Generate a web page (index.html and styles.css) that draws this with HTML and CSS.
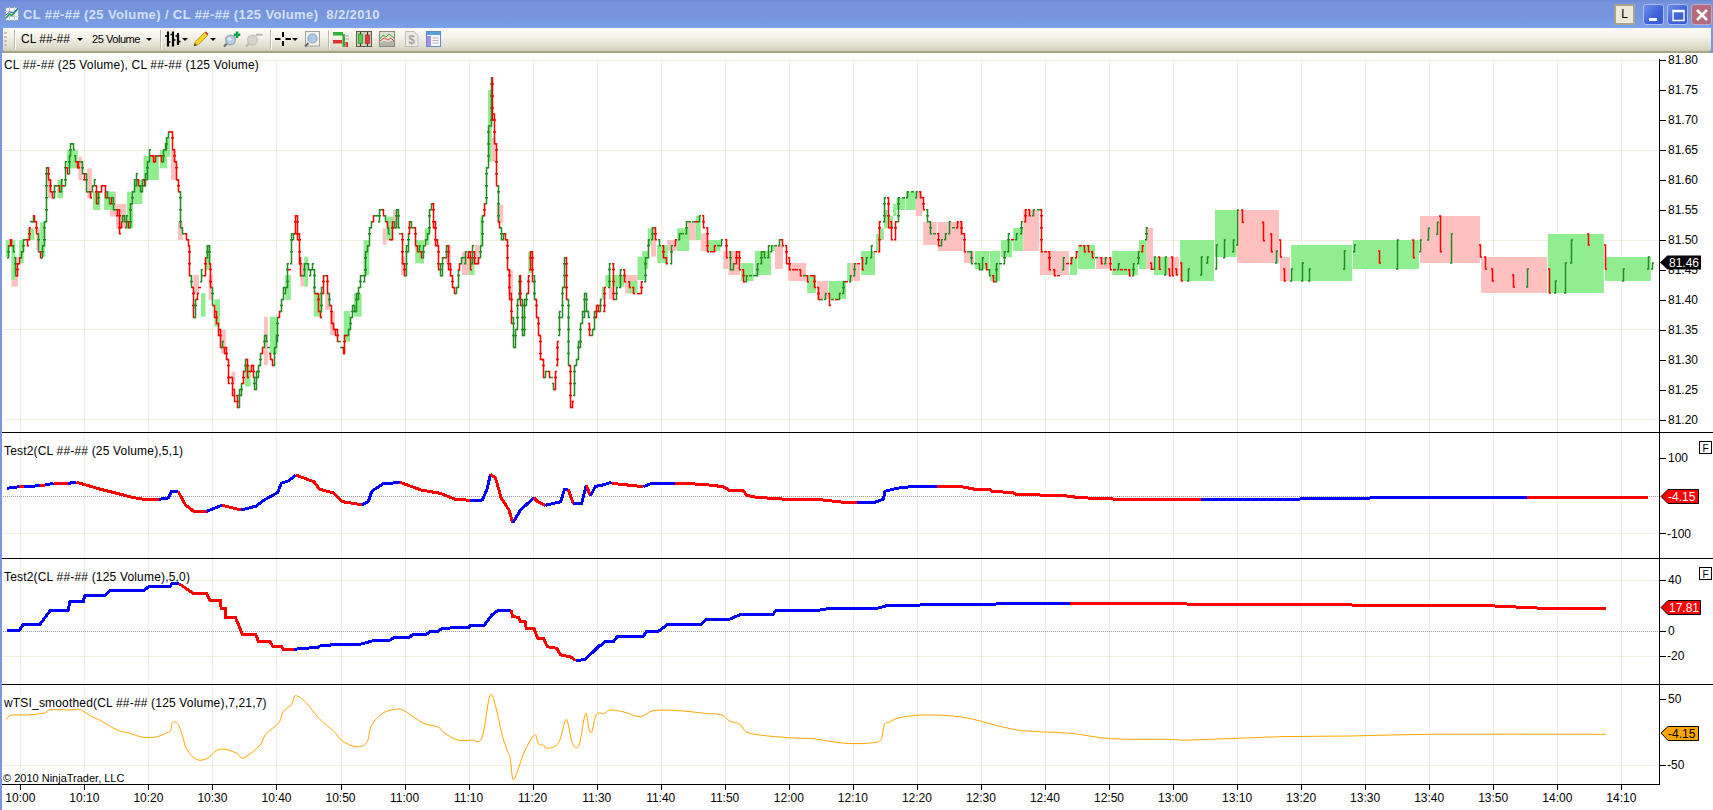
FILE: index.html
```html
<!DOCTYPE html>
<html lang="en">
<head>
<meta charset="utf-8">
<title>CL ##-## (25 Volume) / CL ##-## (125 Volume) 8/2/2010</title>
<link rel="stylesheet" href="styles.css">
</head>
<body>
<div class="window">
  <header class="titlebar">
    <svg class="app-icon" width="14" height="14" viewBox="0 0 14 14">
      <rect x="0.5" y="0.5" width="13" height="13" fill="#eef2f8" stroke="#8f9fb8"/>
      <path d="M0 4.5h14M0 9.5h14M4.5 0v14M9.5 0v14" stroke="#c4cede" stroke-width="1"/>
      <path d="M1 11L4.5 7L7 8.5L12.5 2" fill="none" stroke="#2aa048" stroke-width="1.6"/>
      <path d="M1 8L4.5 5L8 6L13 1" fill="none" stroke="#3468d0" stroke-width="1"/>
    </svg>
    <div class="title-text">CL ##-## (25 Volume) / CL ##-## (125 Volume)  8/2/2010</div>
    <div class="link-btn">L</div>
    <div class="win-btn win-min"><svg width="20" height="20" viewBox="0 0 20 20"><rect x="5" y="13" width="8" height="3" fill="#fff"/></svg></div>
    <div class="win-btn win-max"><svg width="20" height="20" viewBox="0 0 20 20"><path d="M5 5.5h11v10h-11zM5 6.5h11" fill="none" stroke="#fff" stroke-width="1.4"/></svg></div>
    <div class="win-btn win-close"><svg width="20" height="20" viewBox="0 0 20 20"><path d="M5 5L15 15M15 5L5 15" stroke="#fff" stroke-width="2.6"/></svg></div>
  </header>

  <nav class="toolbar">
    <span class="grip ml1"></span>
    <span class="sep ml7"></span>
    <span class="combo combo-inst ml6">CL ##-##</span>
    <span class="caret ml6"></span>
    <span class="combo combo-period ml9">25 Volume</span>
    <span class="caret ml6"></span>
    <span class="sep ml8"></span>

    <svg class="ml4" width="16" height="16" viewBox="0 0 16 16"><path d="M3 0.5v15M8 0.5v15M13 2v12" stroke="#000" stroke-width="2.2" fill="none"/><path d="M0 5h3M3 11h2.5M5.500 3.500h2.500M8 9h2.500M10.500 5h2.500M13 10.500h2.500" stroke="#000" stroke-width="1.4"/></svg>
    <span class="caret ml1"></span>

    <svg class="ml5" width="16" height="16" viewBox="0 0 16 16"><path d="M1 15L2.500 10.500L11.500 1.500L14.500 4.500L5.500 13.500Z" fill="#f7d428" stroke="#a98f1c" stroke-width="0.8"/><path d="M11.500 1.500L13 0.500L15.500 3L14.500 4.500Z" fill="#dd4444"/><path d="M1 15L1.900 12.200L3.800 14.100Z" fill="#333"/></svg>
    <span class="caret ml1"></span>

    <svg class="ml7" width="18" height="16" viewBox="0 0 18 16"><path d="M1 15.500L4.500 12" stroke="#6a6f78" stroke-width="2.200"/><circle cx="7.500" cy="9" r="4.800" fill="#b4cdea" stroke="#a5aab2" stroke-width="1.400"/><circle cx="6.500" cy="8" r="1.800" fill="#e8f1fb"/><path d="M14 0.500v6.500M10.800 3.700h6.500" stroke="#00a84a" stroke-width="2.600"/></svg>
    <svg class="ml4" width="18" height="16" viewBox="0 0 18 16"><path d="M1 15.500L4.500 12" stroke="#b8b8b0" stroke-width="2.200"/><circle cx="7.500" cy="9" r="4.800" fill="#d4d4cc" stroke="#c4c4bc" stroke-width="1.400"/><path d="M11 3.700h6.500" stroke="#b4b4ac" stroke-width="2"/></svg>
    <span class="sep ml7"></span>

    <svg class="ml4" width="16" height="16" viewBox="0 0 16 16"><path d="M0 8h5.500M10.500 8h5.500M8 1v5M8 10v5" stroke="#000" stroke-width="2"/></svg>
    <span class="caret ml1"></span>

    <svg class="ml6" width="16" height="16" viewBox="0 0 16 16"><rect x="1.500" y="0.500" width="14" height="14.500" fill="#f4f2e8" stroke="#a0a0a0"/><path d="M1 15.500L4.500 12" stroke="#666" stroke-width="2"/><circle cx="8.500" cy="7.500" r="4.500" fill="#a9c8ec" stroke="#8ea4bc" stroke-width="1.200"/></svg>
    <span class="sep ml8"></span>

    <svg class="ml4" width="16" height="16" viewBox="0 0 16 16"><rect x="0" y="1" width="10" height="3.500" fill="#34b034"/><rect x="0" y="9" width="9" height="3.500" fill="#e03030"/><rect x="9.500" y="3" width="2.500" height="13" fill="#30a830"/><rect x="12.500" y="11" width="2.500" height="5" fill="#e03030"/><path d="M11 5h5M12 8h4" stroke="#b0b0a8" stroke-width="1"/></svg>
    <svg class="ml7" width="16" height="16" viewBox="0 0 16 16"><rect x="0.500" y="0.500" width="15" height="15" fill="#cfcbb8" stroke="#5a5a50"/><path d="M4.500 1v14M11.500 1v14" stroke="#333" stroke-width="1"/><rect x="2.500" y="3" width="4" height="9.500" fill="#4ad04a" stroke="#1a7a1a" stroke-width="0.600"/><rect x="9.500" y="4" width="4" height="8.500" fill="#e83838" stroke="#8a1a1a" stroke-width="0.600"/></svg>
    <svg class="ml7" width="16" height="16" viewBox="0 0 16 16"><rect x="0.500" y="0.500" width="15" height="15" fill="#e2dfd0" stroke="#8a8a80"/><path d="M1 12L5 10L9 11L15 9V15H1Z" fill="#b4b4a8"/><path d="M1 8L4 4L7 6L10 3L15 7" fill="none" stroke="#38b038" stroke-width="1"/><path d="M1 10L5 7L9 9L12 7L15 10" fill="none" stroke="#e04848" stroke-width="1"/></svg>
    <svg class="ml9" width="15" height="16" viewBox="0 0 15 16"><path d="M1.500 0.500H10L14 4.500V15.500H1.500Z" fill="#ecebe3" stroke="#bdbdb5"/><text class="doc-dollar" x="7.500" y="13">$</text></svg>
    <svg class="ml7" width="15" height="16" viewBox="0 0 15 16"><rect x="0.500" y="0.500" width="14" height="15" fill="#f6f6f4" stroke="#6488c8"/><rect x="1" y="1" width="13" height="3" fill="#58a0e0"/><rect x="1" y="5" width="4" height="10" fill="#a490e4"/><path d="M6.500 7h6M6.500 9.500h6M6.500 12h6" stroke="#b8b8c4" stroke-width="1"/></svg>
  </nav>

  <main class="chart">
    <svg class="pane pane-price" viewBox="2 53 1711 379" width="1711" height="379">
      <g id="marks-price"></g>
      <text class="pane-title" x="4" y="69">CL ##-## (25 Volume), CL ##-## (125 Volume)</text>
      <g class="axis-labels">
        <text x="1668" y="64">81.80</text><text x="1668" y="94">81.75</text><text x="1668" y="124">81.70</text>
        <text x="1668" y="154">81.65</text><text x="1668" y="184">81.60</text><text x="1668" y="214">81.55</text>
        <text x="1668" y="244">81.50</text><text x="1668" y="274">81.45</text><text x="1668" y="304">81.40</text>
        <text x="1668" y="334">81.35</text><text x="1668" y="364">81.30</text><text x="1668" y="394">81.25</text>
        <text x="1668" y="424">81.20</text>
      </g>
      <polygon class="tag-black" points="1660,262.500 1667.500,255.500 1701,255.500 1701,269.500 1667.500,269.500"/>
      <text class="tag-text tag-light" x="1669" y="267">81.46</text>
    </svg>

    <svg class="pane pane-test" viewBox="2 433 1711 125" width="1711" height="125">
      <g id="marks-test-a"></g>
      <text class="pane-title" x="4" y="455">Test2(CL ##-## (25 Volume),5,1)</text>
      <g class="axis-labels">
        <text x="1668" y="462">100</text>
        <text x="1667" y="537.500">-100</text>
      </g>
      <polygon class="tag-red" points="1661,496.500 1668,489.500 1698.500,489.500 1698.500,503.500 1668,503.500"/>
      <text class="tag-text tag-light" x="1668" y="501">-4.15</text>
      <rect class="f-box" x="1699.500" y="441.500" width="12" height="12"/>
      <text class="f-text" x="1705.500" y="452">F</text>
    </svg>

    <svg class="pane pane-test" viewBox="2 559 1711 125" width="1711" height="125">
      <g id="marks-test-b"></g>
      <text class="pane-title" x="4" y="581">Test2(CL ##-## (125 Volume),5,0)</text>
      <g class="axis-labels">
        <text x="1668" y="584">40</text>
        <text x="1668" y="635">0</text>
        <text x="1667" y="660">-20</text>
      </g>
      <polygon class="tag-red" points="1661,607.500 1668,600.500 1700.500,600.500 1700.500,614.500 1668,614.500"/>
      <text class="tag-text tag-light" x="1669" y="612">17.81</text>
      <rect class="f-box" x="1699.500" y="567.500" width="12" height="12"/>
      <text class="f-text" x="1705.500" y="578">F</text>
    </svg>

    <svg class="pane pane-tsi" viewBox="2 685 1711 99" width="1711" height="99">
      <g id="marks-tsi"></g>
      <text class="pane-title" x="4" y="707">wTSI_smoothed(CL ##-## (125 Volume),7,21,7)</text>
      <text class="copyright" x="3" y="782">© 2010 NinjaTrader, LLC</text>
      <g class="axis-labels">
        <text x="1668" y="703">50</text>
        <text x="1667" y="769">-50</text>
      </g>
      <polygon class="tag-orange" points="1661,733 1668,726.500 1698.500,726.500 1698.500,740.500 1668,740.500"/>
      <text class="tag-text" x="1668" y="738">-4.15</text>
    </svg>

    <svg class="time-axis" viewBox="2 784 1711 26" width="1711" height="26">
      <g id="marks-time"></g>
      <g class="time-labels">
        <text x="20.300" y="802">10:00</text><text x="84.300" y="802">10:10</text><text x="148.400" y="802">10:20</text>
        <text x="212.400" y="802">10:30</text><text x="276.500" y="802">10:40</text><text x="340.500" y="802">10:50</text>
        <text x="404.500" y="802">11:00</text><text x="468.600" y="802">11:10</text><text x="532.600" y="802">11:20</text>
        <text x="596.700" y="802">11:30</text><text x="660.700" y="802">11:40</text><text x="724.700" y="802">11:50</text>
        <text x="788.800" y="802">12:00</text><text x="852.800" y="802">12:10</text><text x="916.900" y="802">12:20</text>
        <text x="980.900" y="802">12:30</text><text x="1044.900" y="802">12:40</text><text x="1109" y="802">12:50</text>
        <text x="1173" y="802">13:00</text><text x="1237.100" y="802">13:10</text><text x="1301.100" y="802">13:20</text>
        <text x="1365.100" y="802">13:30</text><text x="1429.200" y="802">13:40</text><text x="1493.200" y="802">13:50</text>
        <text x="1557.300" y="802">14:00</text><text x="1621.300" y="802">14:10</text>
      </g>
    </svg>
  </main>
</div>
<script src="chart.js"></script>
</body>
</html>
```
FILE: styles.css
```css
* { box-sizing: border-box; }
html, body { margin: 0; padding: 0; }
body {
  width: 1713px;
  height: 810px;
  overflow: hidden;
  font-family: "Liberation Sans", Arial, sans-serif;
  font-size: 12px;
  color: #000;
}
.window {
  width: 1713px;
  height: 810px;
  display: flex;
  flex-direction: column;
  background: #7a96df;
  overflow: hidden;
}

/* title bar */
.titlebar {
  flex: none;
  height: 28px;
  display: flex;
  align-items: center;
  padding: 0 1px 0 5px;
  background: linear-gradient(#6c8ad6 0, #7794dc 12%, #7694dc 55%, #7ba2ea 100%);
}
.app-icon { flex: none; }
.title-text {
  flex: 1;
  margin-left: 4px;
  white-space: pre;
  font-size: 13px;
  font-weight: bold;
  letter-spacing: 0.38px;
  color: #d5e1f7;
}
.link-btn {
  width: 21px;
  height: 21px;
  margin-right: 8px;
  display: flex;
  align-items: center;
  justify-content: center;
  border: 2px solid #a8a290;
  background: #ece9d8;
  font-size: 12px;
}
.win-btn {
  width: 21px;
  height: 21px;
  margin-left: 3px;
  border: 1px solid #a9bdf0;
  border-radius: 3px;
  overflow: hidden;
}
.win-btn svg { display: block; }
.link-btn + .win-btn { margin-left: 0; }
.win-min, .win-max { background: linear-gradient(135deg, #6d8fec, #3f60d8 60%, #3a5ad0); }
.win-close { background: #b26a7c; border-color: #c0a8c0; }

/* toolbar */
.toolbar {
  flex: none;
  height: 25px;
  margin: 0 2px 0 3px;
  display: flex;
  align-items: center;
  padding-bottom: 1px;
  background: linear-gradient(#fcfbf6 0, #f3f1e8 40%, #e0decd 80%, #d0cdb8 100%);
  border-bottom: 2px solid #a5a483;
  border-radius: 0 0 4px 3px;
}
.toolbar svg { flex: none; display: block; }
.grip {
  width: 3px;
  height: 15px;
  background: repeating-linear-gradient(#c4c2b0 0, #c4c2b0 2px, transparent 2px, transparent 4px);
}
.sep { width: 1px; height: 19px; background: #bdbba8; box-shadow: 1px 0 0 #fff; flex: none; }
.combo { white-space: nowrap; flex: none; }
.combo-inst { width: 50px; font-size: 12px; }
.combo-period { width: 48px; font-size: 11px; letter-spacing: -0.45px; }
.caret {
  flex: none;
  width: 0;
  height: 0;
  border-left: 3px solid transparent;
  border-right: 3px solid transparent;
  border-top: 3px solid #000;
}
.doc-dollar { font: bold 12px "Liberation Sans", sans-serif; fill: #a8a8a0; text-anchor: middle; }
.ml1 { margin-left: 1px; }
.ml4 { margin-left: 4px; }
.ml5 { margin-left: 5px; }
.ml6 { margin-left: 6px; }
.ml7 { margin-left: 7px; }
.ml8 { margin-left: 8px; }
.ml9 { margin-left: 9px; }

/* chart panes */
.chart {
  flex: 1;
  margin-left: 2px;
  display: flex;
  flex-direction: column;
  background: #000;
}
.pane, .time-axis { display: block; flex: none; background: #fff; }
.pane-price, .pane-test { margin-bottom: 1px; }

.pane-title { font-size: 12px; letter-spacing: 0.18px; fill: #000; }
.copyright { font-size: 11px; fill: #000; }
.axis-labels text { font-size: 12px; fill: #000; }
.time-labels text { font-size: 12px; fill: #000; text-anchor: middle; }

.tag-black { fill: #000; }
.tag-red { fill: #f00; stroke: #000; stroke-width: 1; }
.tag-orange { fill: #ffa500; stroke: #000; stroke-width: 1; }
.tag-text { font-size: 12px; fill: #000; }
.tag-light { fill: #fff; }
.f-box { fill: #fff; stroke: #000; stroke-width: 1; }
.f-text { font-size: 10px; fill: #000; text-anchor: middle; }

.grid-line { stroke: #f0f0e0; stroke-width: 1; shape-rendering: crispEdges; }
.axis-line { stroke: #000; stroke-width: 1; shape-rendering: crispEdges; }
.zero-line { stroke: #9a9a9a; stroke-width: 1; stroke-dasharray: 1 1; shape-rendering: crispEdges; }
.box-up { fill: #90ee90; }
.box-down { fill: #ffc0c0; }
.bar { fill: none; stroke-width: 1.5; }
.bar-up { stroke: #228b22; }
.bar-down { stroke: #f00; }
.study { fill: none; stroke-width: 3; stroke-linejoin: miter; shape-rendering: crispEdges; }
.study-blue { stroke: #00f; }
.study-red { stroke: #f00; }
.study-orange { fill: none; stroke: #ffa500; stroke-width: 1; }
```
FILE: chart.js
```js
(function () {
  var NS = 'http://www.w3.org/2000/svg';
  function add(parent, tag, attrs) {
    var n = document.createElementNS(NS, tag);
    for (var k in attrs) n.setAttribute(k, attrs[k]);
    parent.appendChild(n);
    return n;
  }
  function byId(id) { return document.getElementById(id); }

  /* sampled coordinates, each set in its own frame */
  function frame(ox, oy, sx) {
    return function (p) { return [p[0] / sx + ox, p[1] / 3 + oy]; };
  }
  var fA = frame(0, 60, 2.613);     /* price, up to 11:30 */
  var fB = frame(600, 170, 2.8);    /* price, 11:30 - 13:00 */
  var fC = frame(1150, 190, 2.785); /* price, 13:00 on */
  var fL = frame(0, 430, 2.613);    /* studies left */
  var fM = frame(600, 430, 3);      /* studies middle */
  var fT = frame(0, 680, 1.96);     /* tsi left */
  var fU = frame(800, 680, 1.96);   /* tsi right */

  /* grids */
  var gridX = [];
  for (var i = 0; i < 26; i++) gridX.push(Math.round(20.3 + 64.04 * i) + 0.5);

  function grid(g, top, bottom, rows) {
    gridX.forEach(function (x) { add(g, 'line', { 'class': 'grid-line', x1: x, x2: x, y1: top, y2: bottom }); });
    rows.forEach(function (y) { add(g, 'line', { 'class': 'grid-line', x1: 3, x2: 1659, y1: y + 0.5, y2: y + 0.5 }); });
  }
  function axis(g, top, bottom, ticks) {
    add(g, 'line', { 'class': 'axis-line', x1: 1659.5, x2: 1659.5, y1: top, y2: bottom });
    ticks.forEach(function (y) { add(g, 'line', { 'class': 'axis-line', x1: 1660, x2: 1666, y1: y + 0.5, y2: y + 0.5 }); });
  }
  function zero(g, y) { add(g, 'line', { 'class': 'zero-line', x1: 3, x2: 1661, y1: y + 0.5, y2: y + 0.5 }); }

  var gP = byId('marks-price'), gA = byId('marks-test-a'), gB = byId('marks-test-b'), gC = byId('marks-tsi'), gT = byId('marks-time');

  grid(gP, 60, 432, [60, 150, 240, 329, 419]);
  grid(gA, 433, 558, [533]);
  grid(gB, 559, 684, [580, 656]);
  grid(gC, 685, 784, [765]);

  /* 125-volume boxes: [x0, x1, y0, y1] */
  function boxes(list, f, cls) {
    list.forEach(function (b) {
      var a = f([b[0], b[2]]), c = f([b[1], b[3]]);
      add(gP, 'rect', { 'class': cls, x: a[0], y: a[1], width: c[0] - a[0], height: c[1] - a[1] });
    });
  }
  boxes([[30,47,590,680],[95,105,505,570],[125,135,360,415],[205,215,290,360],[228,240,325,415],[287,303,395,470],[303,330,432,505],[447,460,270,360],[465,478,487,540],[505,520,645,700],[545,557,645,720],[578,590,810,880],[605,615,935,970],[690,700,770,915],[785,795,610,680],[850,862,700,750],[862,875,755,825],[1000,1010,505,555],[1027,1042,450,505],[1048,1060,590,645],[1165,1178,555,610],[1207,1225,575,645],[1240,1252,555,610],[1285,1295,235,305],[1298,1315,435,490],[1328,1340,630,700]], fA, 'box-down');
  boxes([[15,25,540,590],[30,40,540,660],[50,62,540,610],[72,90,505,540],[105,118,487,590],[150,165,360,415],[175,203,270,325],[243,262,395,450],[272,300,395,450],[332,348,395,505],[350,372,360,432],[375,415,288,360],[418,437,270,325],[436,445,235,290],[525,537,700,770],[538,550,555,630],[560,575,718,800],[640,655,915,980],[705,725,770,880],[745,760,645,720],[795,805,590,680],[820,840,700,770],[898,915,753,845],[925,945,700,770],[950,965,540,645],[1010,1027,470,540],[1085,1108,540,610],[1110,1122,505,555],[1225,1240,590,645],[1255,1262,470,555],[1275,1285,90,305],[1380,1390,575,640]], fA, 'box-up');
  boxes([[25,35,350,387],[70,105,315,370],[143,157,175,260],[188,215,210,243],[246,268,156,210],[282,300,190,243],[345,360,243,297],[360,392,243,315],[490,512,225,297],[527,577,279,333],[608,638,333,387],[700,728,279,333],[884,902,66,138],[905,943,156,225],[946,1016,156,243],[1019,1047,243,279],[1185,1229,120,243],[1232,1313,243,315],[1389,1431,261,297],[1530,1548,174,297]], fB, 'box-down');
  boxes([[5,15,350,387],[15,30,315,350],[33,68,315,350],[80,105,333,370],[105,125,260,330],[118,135,243,297],[134,145,175,225],[160,190,225,279],[216,250,175,243],[268,282,138,210],[300,337,210,243],[395,430,279,333],[434,479,243,315],[482,490,225,243],[580,605,315,369],[640,689,333,387],[692,700,279,333],[731,770,243,315],[773,782,192,243],[785,795,175,210],[795,805,120,175],[808,820,138,175],[821,830,102,138],[830,855,84,120],[857,884,66,120],[1050,1090,243,297],[1092,1120,243,333],[1123,1154,210,261],[1157,1184,174,243],[1316,1336,261,315],[1338,1386,225,297],[1434,1506,243,315],[1509,1530,210,297]], fB, 'box-up');
  boxes([[0,8,114,240],[50,81,201,255],[242,359,60,219],[362,390,201,273],[752,919,78,219],[922,1106,201,309]], fC, 'box-down');
  boxes([[11,50,201,255],[84,178,150,273],[181,241,60,201],[393,563,165,273],[565,749,150,237],[1108,1264,132,309],[1267,1395,201,273]], fC, 'box-up');

  /* 25-volume trace */
  var TICK = 5.99;
  var seed = 73;
  function rnd() { seed = (seed * 1664525 + 1013904223) >>> 0; return ((seed >>> 8) % 100000) / 100000; }
  function snap(y) { return 60 + TICK * Math.round((y - 60) / TICK); }
  function bar(x, o, c, up, beads) {
    var d = 'M' + (x - 1.5) + ' ' + o + 'H' + x + 'V' + c + 'H' + (x + 1.5);
    if (beads) {
      /* open/close ticks of the bars stacked along a fast move */
      var lo = Math.min(o, c), hi = Math.max(o, c);
      for (var y = lo + TICK; y < hi - 1; y += TICK * 2) d += 'M' + (x - 1.5) + ' ' + y.toFixed(1) + 'h3';
    }
    add(gP, 'path', { 'class': 'bar ' + (up ? 'bar-up' : 'bar-down'), d: d });
  }
  function trace(points, step, noise, flip, wick) {
    var prev = snap(points[0][1]);
    for (var i = 1; i < points.length; i++) {
      var a = points[i - 1], b = points[i];
      var n = Math.max(1, Math.ceil((b[0] - a[0]) / step));
      for (var k = 1; k <= n; k++) {
        var x = a[0] + (b[0] - a[0]) * k / n;
        var y = a[1] + (b[1] - a[1]) * k / n;
        var inner = k < n;
        if (inner) y += (rnd() - 0.5) * noise;
        var c = snap(y);
        var up = c < prev || (c === prev && rnd() < 0.5);
        if (rnd() < flip) up = !up;
        var px = Math.round(x) + 0.5;
        var beads = Math.abs(c - prev) > TICK * 1.5;
        if (inner && rnd() < wick) {
          /* wick past the close; sampled turning points stay exact */
          bar(px, prev, up ? c - TICK : c + TICK, up, beads);
        } else {
          bar(px, prev, c, up, beads);
        }
        prev = c;
      }
    }
  }
  trace([[15,590],[25,545],[40,640],[50,600],[60,545],[80,480],[90,490],[105,590],[115,490],[120,330],[130,400],[150,380],[175,340],[183,255],[195,300],[210,310],[225,390],[240,370],[250,430],[265,370],[285,430],[315,490],[335,500],[345,400],[375,370],[385,310],[420,300],[445,220],[455,300],[465,390],[470,510],[490,560],[500,680],[505,770],[540,560],[550,680],[565,790],[590,900],[618,1040],[640,900],[665,980],[690,830],[710,910],[730,750],[745,680],[770,470],[785,640],[810,620],[830,760],[850,650],[870,800],[890,870],[915,770],[950,640],[965,510],[995,455],[1020,540],[1035,450],[1055,640],[1070,490],[1100,600],[1127,435],[1150,640],[1165,560],[1187,700],[1205,600],[1250,600],[1265,440],[1282,55],[1290,260],[1300,490],[1320,540],[1340,860],[1355,650],[1365,820],[1385,575],[1410,900],[1445,980],[1473,595],[1490,1040],[1527,700],[1540,830],[1568,720]].map(fA), 2.2, 17, 0.3, 0.3);
  trace([[0,420],[25,280],[35,385],[55,300],[105,370],[125,260],[145,175],[185,280],[210,210],[250,160],[278,140],[300,240],[340,210],[365,300],[380,245],[400,335],[440,280],[480,230],[510,225],[530,300],[570,315],[590,315],[610,385],[650,385],[690,340],[710,280],[770,240],[795,85],[815,210],[835,85],[885,70],[905,120],[925,190],[945,225],[1000,160],[1020,240],[1060,290],[1100,330],[1130,245],[1165,195],[1190,120],[1225,120],[1235,240],[1270,315],[1345,225],[1390,265],[1440,300],[1480,310],[1530,175]].map(fB), 4.5, 11, 0.22, 0.2);

  /* sparse bars at the right: [x, y0, y1, up] */
  [[3,220,238,0],[12,201,238,1],[25,201,238,0],[42,201,255,1],[52,237,257,0],[62,201,257,0],[73,237,255,0],[85,219,273,0],[105,237,273,1],[142,201,255,1],[160,201,219,1],[183,165,237,1],[205,150,203,1],[232,150,185,1],[243,60,165,1],[257,60,97,0],[315,97,152,0],[338,132,185,0],[352,183,219,1],[363,150,201,0],[372,237,273,0],[392,237,273,1],[424,219,273,1],[443,237,273,1],[541,183,237,1],[567,165,185,1],[639,183,219,0],[689,150,237,1],[733,150,203,0],[753,150,185,1],[775,115,150,1],[798,97,133,1],[808,78,185,0],[837,132,219,1],[920,165,201,0],[932,201,237,0],[953,237,273,0],[1010,255,291,0],[1051,237,291,1],[1110,237,309,0],[1127,273,309,1],[1155,219,309,1],[1173,150,219,1],[1220,132,165,0],[1268,165,237,0],[1316,237,273,1],[1388,201,237,1],[1399,219,237,1]].forEach(function (b) {
    var p = fC([b[0], b[1]]), q = fC([b[0], b[2]]);
    var x = Math.round(p[0]) + 0.5;
    if (b[3]) bar(x, q[1], p[1], true, false); else bar(x, p[1], q[1], false, false);
  });

  /* studies */
  function study(g, cls, pts) {
    add(g, 'polyline', { 'class': cls, points: pts.map(function (p) { return p[0].toFixed(1) + ',' + p[1].toFixed(1); }).join(' ') });
  }
  var B = 'study study-blue', R = 'study study-red';

  zero(gA, 496);
  [
    [B, fL, [[18,175],[50,170]]], [R, fL, [[50,170],[62,170]]], [B, fL, [[62,170],[105,167]]], [R, fL, [[105,167],[118,165]]],
    [B, fL, [[118,165],[140,160]]], [R, fL, [[140,160],[178,160]]], [B, fL, [[178,160],[200,157]]],
    [R, fL, [[200,157],[225,165],[260,177],[305,190],[350,203],[375,208],[415,208]]],
    [B, fL, [[415,208],[440,204],[447,185],[465,184]]],
    [R, fL, [[465,184],[485,225],[505,243],[540,244]]],
    [B, fL, [[540,244],[580,226]]], [R, fL, [[580,226],[630,240]]],
    [B, fL, [[630,240],[670,228],[690,210],[725,188],[735,160],[755,152],[773,135]]],
    [R, fL, [[773,135],[820,155],[835,178],[870,188],[895,215],[945,224]]],
    [B, fL, [[945,224],[962,215],[972,183],[1000,162],[1045,157]]],
    [R, fL, [[1045,157],[1100,180],[1150,190],[1190,208],[1228,211]]],
    [B, fL, [[1228,211],[1260,210],[1272,180],[1282,132]]],
    [R, fL, [[1282,132],[1295,145],[1310,205],[1330,240],[1340,279]]],
    [B, fL, [[1340,279],[1360,240],[1395,203]]], [R, fL, [[1395,203],[1405,215],[1425,226]]],
    [B, fL, [[1425,226],[1465,215],[1475,178],[1485,178]]], [R, fL, [[1485,178],[1498,222]]],
    [B, fL, [[1498,222],[1520,220],[1532,166]]], [R, fL, [[1532,166],[1543,198]]],
    [B, fL, [[1543,198],[1555,170],[1568,166]]],
    [B, fM, [[0,167],[35,157]]],
    [R, fM, [[35,160],[130,170]]],
    [B, fM, [[130,170],[155,160],[225,160]]],
    [R, fM, [[225,160],[310,163],[370,170],[390,182],[430,182],[440,196],[470,202],[560,208],[650,208],[740,218],[770,218]]],
    [B, fM, [[770,218],[820,218],[850,208],[855,184],[890,175],[950,168],[1010,168]]],
    [R, fM, [[1010,168],[1085,170],[1125,178],[1170,178],[1175,184],[1240,188],[1245,192],[1320,195],[1400,198],[1440,203],[1560,208],[1803,208]]],
    [B, fM, [[1803,208],[2100,207],[2460,202],[2781,202]]],
    [R, fM, [[2781,202],[3144,202]]]
  ].forEach(function (s) { study(gA, s[0], s[2].map(s[1])); });

  zero(gB, 631);
  [
    [B, fL, [[18,601],[50,601],[62,582],[105,582],[118,562],[132,541],[178,541],[183,513],[218,513],[222,495],[275,495],[288,480],[378,480],[390,468],[445,468],[450,460],[468,461]]],
    [R, fL, [[468,461],[505,490],[540,490],[548,510],[575,510],[578,535],[590,535],[590,562],[615,562],[633,612],[668,612],[675,633],[705,633],[712,648],[735,648],[740,658],[768,658]]],
    [B, fL, [[768,658],[830,652],[840,646],[945,642],[975,632],[1020,630],[1030,622],[1070,622],[1080,612],[1115,612],[1125,604],[1145,604],[1155,595],[1225,592],[1230,586],[1265,586],[1285,555],[1300,542],[1335,541]]],
    [R, fL, [[1335,541],[1340,560],[1355,562],[1360,575],[1372,575],[1375,595],[1395,595],[1405,625],[1420,625],[1430,650],[1455,655],[1465,675],[1490,680],[1505,692]]],
    [B, fL, [[1505,692],[1530,688],[1550,665],[1568,645]]],
    [B, fM, [[0,648],[15,635],[40,635],[52,619],[130,619],[140,604],[175,604],[205,582],[305,582],[320,567],[390,567],[425,552],[520,552],[528,541],[655,541],[690,535],[830,535],[865,526],[955,526],[975,523],[1180,523],[1210,520],[1410,520]]],
    [R, fM, [[1410,520],[2400,526],[2640,526],[2829,535],[3018,535]]]
  ].forEach(function (s) { study(gB, s[0], s[2].map(s[1])); });

  /* tsi: sampled points joined by a curve that stays inside each x interval */
  var tsi = [[12,118],[20,106],[50,105],[90,98],[95,90],[135,90],[155,88],[165,95],[180,110],[195,120],[230,150],[255,160],[280,172],[305,171],[325,160],[335,150],[337,130],[348,130],[358,170],[365,205],[385,238],[405,236],[430,208],[465,220],[472,233],[480,232],[510,195],[520,165],[548,125],[555,95],[572,72],[578,47],[600,68],[625,115],[655,155],[670,182],[700,200],[720,185],[727,140],[750,100],[775,88],[790,90],[830,130],[860,142],[870,158],[897,180],[925,180],[945,172],[960,47],[968,60],[985,170],[995,215],[1000,235],[1005,297],[1015,270],[1025,225],[1040,180],[1050,165],[1055,192],[1065,195],[1070,205],[1095,188],[1108,122],[1112,122],[1122,190],[1135,195],[1148,100],[1155,150],[1160,155],[1168,105],[1185,100],[1195,90],[1225,97],[1255,110],[1280,92],[1340,93],[1380,100],[1415,105],[1430,123],[1450,133],[1462,155],[1480,163],[1520,170],[1568,175]].map(fT)
    .concat([[20,175],[90,190],[150,187],[160,175],[165,135],[175,127],[190,115],[240,105],[320,112],[395,140],[435,152],[530,160],[610,176],[730,178],[750,181],[940,170],[1080,168],[1230,163],[1568,163]].map(fU))
    .concat([[1606,734.3]]);
  function smooth(p) {
    function slope(i) {
      var a = p[Math.max(0, i - 1)], b = p[Math.min(p.length - 1, i + 1)];
      return (b[1] - a[1]) / (b[0] - a[0]);
    }
    var d = 'M' + p[0][0].toFixed(1) + ' ' + p[0][1].toFixed(1);
    for (var i = 0; i < p.length - 1; i++) {
      var a = p[i], b = p[i + 1], h = (b[0] - a[0]) / 3;
      d += 'C' + (a[0] + h).toFixed(1) + ' ' + (a[1] + slope(i) * h).toFixed(1) + ' ' +
        (b[0] - h).toFixed(1) + ' ' + (b[1] - slope(i + 1) * h).toFixed(1) + ' ' +
        b[0].toFixed(1) + ' ' + b[1].toFixed(1);
    }
    return d;
  }
  add(gC, 'path', { 'class': 'study-orange', d: smooth(tsi) });

  /* axes */
  axis(gP, 59, 432, [60,90,120,150,180,210,240,270,300,330,360,390,420]);
  axis(gA, 433, 558, [458, 533]);
  axis(gB, 559, 684, [580, 631, 656]);
  axis(gC, 685, 784, [699, 765]);

  /* time axis */
  add(gT, 'line', { 'class': 'axis-line', x1: 2, x2: 1660, y1: 784.5, y2: 784.5 });
  gridX.forEach(function (x) { add(gT, 'line', { 'class': 'axis-line', x1: x, x2: x, y1: 785, y2: 790 }); });
})();
```
